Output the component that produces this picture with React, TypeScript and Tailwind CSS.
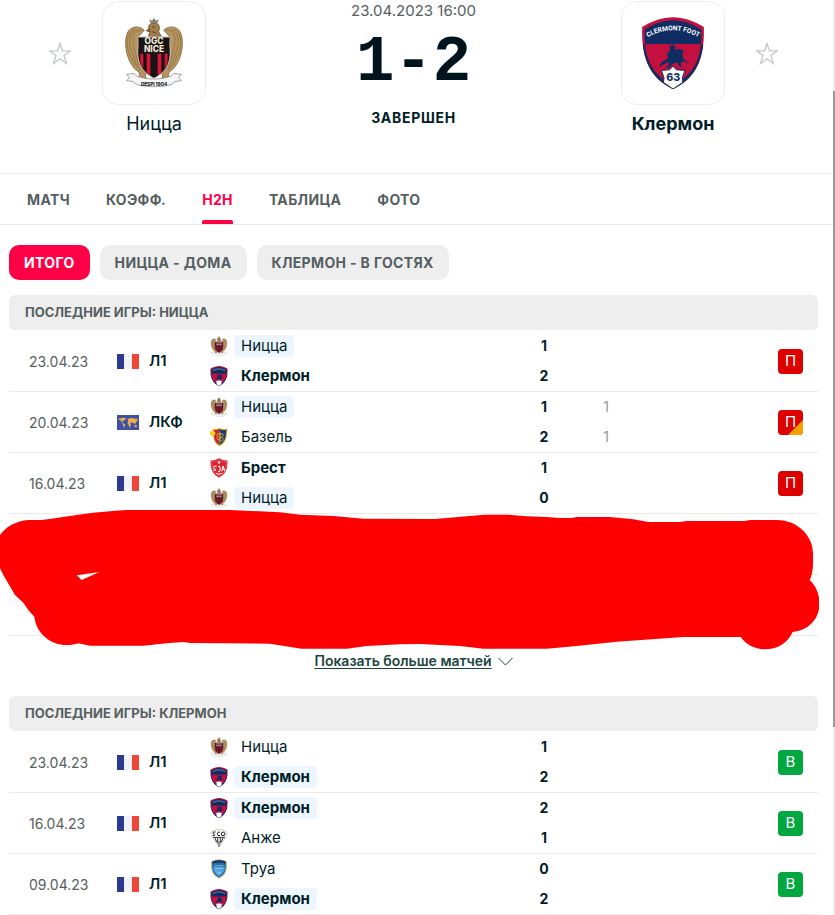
import React from 'react';

type Club = 'nice' | 'clermont' | 'basel' | 'brest' | 'angers' | 'troyes';

interface Side {
  club: Club;
  name: string;
  goals: number;
  extra?: number;
  bold?: boolean;
  current?: boolean;
}

interface Match {
  date: string;
  league: string;
  flag: 'fr' | 'world';
  home: Side;
  away: Side;
  result: 'win' | 'loss' | 'lossAfterDraw';
}

const tabs = ['МАТЧ', 'КОЭФФ.', 'H2H', 'ТАБЛИЦА', 'ФОТО'];
const filters = ['ИТОГО', 'НИЦЦА - ДОМА', 'КЛЕРМОН - В ГОСТЯХ'];

const niceMatches: Match[] = [
  {
    date: '23.04.23',
    league: 'Л1',
    flag: 'fr',
    home: { club: 'nice', name: 'Ницца', goals: 1, current: true },
    away: { club: 'clermont', name: 'Клермон', goals: 2, bold: true },
    result: 'loss',
  },
  {
    date: '20.04.23',
    league: 'ЛКФ',
    flag: 'world',
    home: { club: 'nice', name: 'Ницца', goals: 1, extra: 1, current: true },
    away: { club: 'basel', name: 'Базель', goals: 2, extra: 1 },
    result: 'lossAfterDraw',
  },
  {
    date: '16.04.23',
    league: 'Л1',
    flag: 'fr',
    home: { club: 'brest', name: 'Брест', goals: 1, bold: true },
    away: { club: 'nice', name: 'Ницца', goals: 0, current: true },
    result: 'loss',
  },
];

const clermontMatches: Match[] = [
  {
    date: '23.04.23',
    league: 'Л1',
    flag: 'fr',
    home: { club: 'nice', name: 'Ницца', goals: 1 },
    away: { club: 'clermont', name: 'Клермон', goals: 2, bold: true, current: true },
    result: 'win',
  },
  {
    date: '16.04.23',
    league: 'Л1',
    flag: 'fr',
    home: { club: 'clermont', name: 'Клермон', goals: 2, bold: true, current: true },
    away: { club: 'angers', name: 'Анже', goals: 1 },
    result: 'win',
  },
  {
    date: '09.04.23',
    league: 'Л1',
    flag: 'fr',
    home: { club: 'troyes', name: 'Труа', goals: 0 },
    away: { club: 'clermont', name: 'Клермон', goals: 2, bold: true, current: true },
    result: 'win',
  },
];

const NiceWing = () => (
  <g>
    <path
      d="M342 92C330 78 306 78 294 94C283 112 284 142 291 166C297 188 309 208 326 217L330 240L347 238L343 200L326 170L323 112Z"
      fill="#b8955f"
      stroke="#6b532f"
      strokeWidth="2"
    />
    <path
      d="M333 92C312 90 303 112 310 138L328 212M324 90C300 92 293 120 301 146L322 206M314 88C292 96 286 122 294 154L314 198"
      fill="none"
      stroke="#8a6c3e"
      strokeWidth="2"
    />
    <path d="M326 238l-6 8 9-3 2 6 5-7 10 5-3-11z" fill="#8d6c3b" />
  </g>
);

const NiceCrest = ({ small }: { small?: boolean }) => (
  <svg viewBox="284 53 174 214" className="h-full w-full" aria-hidden="true">
    <NiceWing />
    <g transform="matrix(-1 0 0 1 742 0)">
      <NiceWing />
    </g>
    <path
      d="M354 110l6-18-5-6c-2-10 6-16 16-16 11 0 18 6 16 18l-2 8 8 14z"
      fill="#a37f49"
      stroke="#4d381c"
      strokeWidth="2"
    />
    <path d="M356 88l-8 5 10 3zM366 82h8M366 96l10 4" stroke="#4d381c" strokeWidth="3" fill="#e2ba62" />
    <path d="M360 69l-3-10 8 5 6-9 6 9 8-5-3 10z" fill="#7d766a" />
    <path
      d="M289 224l22-3 8 8c32 12 72 12 104 0l8-8 22 3-8 10 8 9-20 3c-5 20-119 20-124 0l-20-3 8-9z"
      fill="#f5f5f5"
      stroke="#777"
      strokeWidth="2"
    />
    <path
      d="M322 112h98c-4 28 4 46-4 74-6 24-26 40-45 50-19-10-39-26-45-50-8-28 0-46-4-74z"
      fill={small ? '#5c1620' : '#1a1416'}
      stroke="#c9c2b8"
      strokeWidth="3"
    />
    <path
      d="M330 162h9v46l-7-14c-3-10-2-20-2-32zM349 162h11v65l-11-8zM382 162h11v57l-11 8zM403 162h9c0 12 1 22-2 32l-7 14z"
      fill={small ? '#8e1a2c' : '#dc1435'}
    />
    {small ? (
      <path d="M340 127h62M340 146h62" stroke="#b5a49c" strokeWidth="10" />
    ) : (
      <g fill="#f2e8d5" fontFamily="Inter, sans-serif" fontWeight="800" textAnchor="middle">
        <text fontSize="25">
          <tspan x="371" y="134">OGC</tspan>
          <tspan x="371" y="157">NICE</tspan>
        </text>
        <text x="371" y="258" fontSize="14" fill="#222">DESPI 1904</text>
      </g>
    )}
  </svg>
);

const ClermontCrest = ({ small }: { small?: boolean }) => (
  <svg viewBox="126 50 186 217" className="h-full w-full" aria-hidden="true">
    <path
      d="M126 80C158 62 187 51 219 51s61 11 93 29c2 82-14 150-93 187-79-37-95-105-93-187z"
      fill="#c4103f"
    />
    <path
      d="M134 88c27-17 55-28 85-28s58 11 85 28c1 15 1 30-1 45H135c-2-15-2-30-1-45z"
      fill="#0f2d63"
    />
    <path
      d="M128 133h7c6 56 30 96 84 123 54-27 78-67 84-123h7c-7 63-36 109-91 134-55-25-84-71-91-134z"
      fill="#0f2d63"
    />
    <path d="M135 133h168" stroke="#c4103f" strokeWidth="3" />
    <path
      d="M207 126l4 12 8-5 7 5-1 12 9-4 12 2 5 7-4 8 4 14 22 16-24-10-8 8 6 12-12-8-3-8-14 5-9 10-14 1 12-8-2-9-12 5-17 11 10-18 17-8-1-18 8-8z"
      fill="#0f2d63"
    />
    <path
      d="M219 198l10 11 26 2-8 22 2 14-30 20-29-20 2-14-8-22 25-2z"
      fill="#fff"
      stroke="#0f2d63"
      strokeWidth="3"
    />
    {small ? (
      <path d="M152 100q67-38 134 0" fill="none" stroke="#8391b8" strokeWidth="9" />
    ) : (
      <g fontFamily="Roboto, sans-serif" fontWeight="700" textAnchor="middle">
        <path id="clermont-arc" d="M143 111Q219 69 295 111" fill="none" />
        <text fontSize="20" fill="#fff">
          <textPath href="#clermont-arc" startOffset="50%">CLERMONT FOOT</textPath>
        </text>
        <text x="220" y="244" fontSize="32" fill="#0f2d63" fontFamily="Inter, sans-serif" fontWeight="800">63</text>
      </g>
    )}
  </svg>
);

const BaselCrest = () => (
  <svg viewBox="0 0 54 60" className="h-full w-full" aria-hidden="true">
    <path d="M8 5q10 2 20-3 12 6 25 2-2 26-6 36-6 12-18 18-13-6-17-18Q8 28 8 5z" fill="#e5bd3b" />
    <path d="M11 9q9 1 17-3v48q-10-6-14-16-3-12-3-29z" fill="#bf2430" />
    <path d="M28 6q10 5 21 2-1 22-5 31-5 10-16 15z" fill="#1d3e70" />
    <path
      d="M28 14v34M20 22q8-6 16 0M21 22v14q7 6 7-4M31 20q11-2 9 6-2 5-8 5 10 0 7 9-3 3-8 2z"
      fill="none"
      stroke="#e5bd3b"
      strokeWidth="2"
    />
    <circle cx="8" cy="19" r="8" fill="#f0cf21" />
  </svg>
);

const BrestCrest = () => (
  <svg viewBox="0 0 54 60" className="h-full w-full" aria-hidden="true">
    <path d="M2 7Q16 8 27 1q11 7 25 6 4 38-25 52Q-2 45 2 7z" fill="#dc2230" />
    <path d="M5 10Q17 11 27 5q10 6 22 5 2 33-22 45Q3 43 5 10z" fill="none" stroke="#f4b5b8" strokeWidth="1" />
    <path
      d="M27 9v9M23 13h8M20 25q-10-3-10 3 0 4 6 5 5 4-6 5M24 25h6v13q-1 5-6 3M35 40l4-16 6 16M36 34h8M18 46q9 5 18 0"
      fill="none"
      stroke="#fff"
      strokeWidth="3"
    />
  </svg>
);

const AngersCrest = () => (
  <svg viewBox="0 0 54 60" className="h-full w-full" aria-hidden="true">
    <path d="M5 11Q27-2 49 11l3 6-7 13-18 27L9 30 2 17z" fill="#fff" stroke="#aaa" strokeWidth="2" />
    <path
      d="M17 12q-8-2-8 3 0 3 4 4 5 3-5 4M30 12q-8-1-8 5 0 7 8 6M39 12q-5 0-5 6t5 5q6 0 6-5t-6-6"
      fill="none"
      stroke="#222"
      strokeWidth="3"
    />
    <path d="M9 28h36M15 30l5 12M23 29v17M31 29v17M39 30l-5 12M27 40v16" stroke="#333" strokeWidth="3" />
  </svg>
);

const TroyesCrest = () => (
  <svg viewBox="0 0 54 60" className="h-full w-full" aria-hidden="true">
    <path d="M4 6Q27-4 50 6q8 40-23 53Q-4 46 4 6z" fill="#d2c489" />
    <path d="M7 8q20-8 40 0 6 36-20 48Q1 44 7 8z" fill="#1f6fae" />
    <path d="M7 8q20-8 40 0l1 6q-21-7-42 0z" fill="#1c3556" />
    <path d="M10 24h34q0 18-17 28-17-10-17-28z" fill="#4fa4dc" />
    <path d="M13 20h28M16 28h22M22 36q5 10 12 2M21 42h12" fill="none" stroke="#a9d2ee" strokeWidth="2" />
  </svg>
);

const crests: Record<Club, React.ReactNode> = {
  nice: <NiceCrest small />,
  clermont: <ClermontCrest small />,
  basel: <BaselCrest />,
  brest: <BrestCrest />,
  angers: <AngersCrest />,
  troyes: <TroyesCrest />,
};

const Flag = ({ kind }: { kind: Match['flag'] }) =>
  kind === 'fr' ? (
    <svg viewBox="0 0 22 15" className="h-[15px] w-[22px] shrink-0" aria-hidden="true">
      <path d="M0 0h7v15H0z" fill="#2b3990" />
      <path d="M7 0h8v15H7z" fill="#f1f1f6" />
      <path d="M15 0h7v15h-7z" fill="#ee4639" />
    </svg>
  ) : (
    <svg viewBox="0 0 66 45" className="h-[15px] w-[22px] shrink-0" aria-hidden="true">
      <path d="M0 0h66v45H0z" fill="#414fa8" />
      <path
        d="M5 11l12-3 11 1-5 6-5 3-3 5 7 3 3 4-4 8-3-8-4-8-3-6-5-1zM31 14l8-5 10 1 14 2-3 6-3 5-4 4-4-4-4 1-2-3-3 3 2 4-3 10-4-5-1-6-3-3 3-5zM53 29l7 2-1 6-7-2z"
        fill="#ecb043"
      />
    </svg>
  );

const StarButton = ({ label }: { label: string }) => (
  <button type="button" aria-label={label} className="mt-[41px] h-[23px] w-[22px] shrink-0">
    <svg viewBox="0 0 22 23" className="h-full w-full" fill="none" stroke="#c3c7c8" strokeWidth="1.3">
      <path d="M11 1.500l2.400 7.300h8l-6.400 4.700 2.400 8L11 16.800l-6.400 4.700 2.400-8L.6 8.800h8z" />
    </svg>
  </button>
);

const TeamHead = ({ name, bold, children }: { name: string; bold?: boolean; children: React.ReactNode }) => (
  <div className="flex w-[104px] flex-col items-center gap-2">
    <div className="flex h-[104px] w-[104px] items-center justify-center rounded-2xl border border-[#eee]">
      {children}
    </div>
    <a href="#team" className={`text-[18px] leading-[22px] ${bold ? 'font-bold' : ''}`}>
      {name}
    </a>
  </div>
);

const TeamLine = ({ side }: { side: Side }) => (
  <div className="flex items-center gap-1.5">
    <span className="flex h-5 w-[18px]">{crests[side.club]}</span>
    <span
      className={`rounded px-[7px] text-[15px] leading-[22px] ${side.bold ? 'font-bold' : ''} ${
        side.current ? 'bg-[#edf6ff]' : ''
      }`}
    >
      {side.name}
    </span>
  </div>
);

const ResultBadge = ({ result }: { result: Match['result'] }) => (
  <span
    className={`relative ml-auto flex h-[25px] w-[25px] items-center justify-center overflow-hidden rounded text-[15px] text-white ${
      result === 'win' ? 'bg-[#00a83f]' : 'bg-[#dc0000]'
    }`}
  >
    {result === 'lossAfterDraw' && (
      <svg viewBox="0 0 15 15" className="absolute right-0 bottom-0 h-[15px] w-[15px]" aria-hidden="true">
        <path d="M15 0v15H0z" fill="#f3a000" />
      </svg>
    )}
    <span className="relative">{result === 'win' ? 'В' : 'П'}</span>
  </span>
);

const cell = 'h-[61px] border-b border-[#eaeaea] p-0';

const MatchTable = ({ title, matches, blankRows = 0 }: { title: string; matches: Match[]; blankRows?: number }) => (
  <table aria-label={title} className="mt-px w-full table-fixed border-separate border-spacing-0">
    <colgroup>
      <col className="w-[108px]" />
      <col className="w-[93px]" />
      <col />
      <col className="w-[62px]" />
      <col className="w-[62px]" />
      <col className="w-[181px]" />
    </colgroup>
    <tbody>
      {matches.map((m) => (
        <tr key={m.date}>
          <td className={`${cell} pl-5 text-[14px] text-[#555e61]`}>{m.date}</td>
          <td className={cell}>
            <div className="flex items-center gap-2.5 text-[15px] font-semibold">
              <Flag kind={m.flag} />
              {m.league}
            </div>
          </td>
          <td className={cell}>
            <div className="flex flex-col gap-2">
              <TeamLine side={m.home} />
              <TeamLine side={m.away} />
            </div>
          </td>
          <td className={cell}>
            <div className="flex flex-col gap-2 text-center text-[14px] leading-[22px] font-bold">
              <span>{m.home.goals}</span>
              <span>{m.away.goals}</span>
            </div>
          </td>
          <td className={cell}>
            <div className="flex flex-col gap-2 text-center text-[14px] leading-[22px] text-[#999]">
              <span>{m.home.extra}</span>
              <span>{m.away.extra}</span>
            </div>
          </td>
          <td className={`${cell} pr-[15px]`}>
            <ResultBadge result={m.result} />
          </td>
        </tr>
      ))}
      {Array.from({ length: blankRows }, (_, i) => (
        <tr key={i}>
          <td className={cell} colSpan={6}></td>
        </tr>
      ))}
    </tbody>
  </table>
);

const SectionTitle = ({ children }: { children: React.ReactNode }) => (
  <h2 className="flex h-[35px] items-center rounded-md bg-[#eee] px-4 text-[13px] font-bold text-[#555e61]">
    {children}
  </h2>
);

// Hand-painted red marker over the last rows
const Marker = () => (
  <div className="absolute -right-px -bottom-[14px] -left-[9px] h-[140px]">
    <svg viewBox="0 30 2457 420" preserveAspectRatio="none" className="h-full w-full" aria-hidden="true">
      <path
        fill="#ff0000"
        fillRule="evenodd"
        d="M0 105Q30 65 85 60L125 60C200 50 290 34 380 30L690 30L840 37L900 44L1000 48L1090 56L1305 57L1400 49L1455 44L1525 44L1580 49L1640 51L1680 54L1715 54L1730 51L1830 51L1900 58L1945 66L2040 66L2060 63L2235 63L2250 60L2330 60C2395 60 2439 110 2439 160L2439 195Q2438 222 2429 240C2478 285 2470 385 2378 396C2350 460 2260 465 2222 411L2050 411L1850 425L1730 438L1640 446L1450 446L1380 438L1260 432L1200 433L1100 438L1040 446L905 446L810 431L570 429L550 426L500 430L430 437L270 437L235 430C170 450 110 410 103 350L85 330L70 308L45 285L10 225L0 205ZM230 226L298 216L245 240Z"
      />
    </svg>
  </div>
);

export default function App() {
  return (
    <div className="flex bg-white font-[Inter,sans-serif] text-[#001e28]">
      <div className="min-w-0 flex-1">
        <header className="flex items-start border-b border-[#eaeaea] pt-px pr-[55px] pb-[38px] pl-[49px]">
          <StarButton label="Добавить Ницца в избранное" />
          <div className="ml-[31px]">
            <TeamHead name="Ницца">
              <div className="h-[72px] w-[58px]">
                <NiceCrest />
              </div>
            </TeamHead>
          </div>
          <div className="flex flex-1 flex-col items-center">
            <time className="text-[15px] leading-5 text-[#555e61]">23.04.2023 16:00</time>
            <div className="mt-2.5 font-['Liberation_Mono',monospace] text-[64px] leading-[64px] font-bold text-[#00141e]">
              1-2
            </div>
            <div className="mt-[13px] text-[14px] leading-5 font-bold tracking-wider">ЗАВЕРШЕН</div>
          </div>
          <div className="mr-[31px]">
            <TeamHead name="Клермон" bold>
              <div className="h-[72px] w-[62px]">
                <ClermontCrest />
              </div>
            </TeamHead>
          </div>
          <StarButton label="Добавить Клермон в избранное" />
        </header>

        <nav className="flex h-[51px] gap-9 border-b border-[#eaeaea] pl-[27px]">
          {tabs.map((tab) => (
            <a
              key={tab}
              href="#tab"
              className={`relative flex items-center text-[14px] font-bold tracking-wide ${
                tab === 'H2H' ? 'text-[#ff0046]' : 'text-[#555e61]'
              }`}
            >
              {tab}
              {tab === 'H2H' && <span className="absolute inset-x-0 bottom-0 h-1 rounded-t-xs bg-[#ff0046]" />}
            </a>
          ))}
        </nav>

        <main className="pt-5 pr-[15px] pl-[9px]">
          <div className="mb-[15px] flex gap-2.5">
            {filters.map((filter, i) => (
              <button
                key={filter}
                type="button"
                className={`h-[35px] rounded-[10px] px-[15px] text-[14px] font-bold tracking-wide ${
                  i === 0 ? 'bg-[#ff0046] text-white' : 'bg-[#eee] text-[#555e61]'
                }`}
              >
                {filter}
              </button>
            ))}
          </div>

          <section>
            <SectionTitle>ПОСЛЕДНИЕ ИГРЫ: НИЦЦА</SectionTitle>
            <div className="relative">
              <MatchTable title="Последние игры: Ницца" matches={niceMatches} blankRows={2} />
              <Marker />
            </div>
            <div className="flex justify-center pt-[15px] pb-[25px]">
              <button
                type="button"
                className="flex items-center gap-1.5 text-[14px] leading-5 font-semibold text-[#1d4540]"
              >
                <span className="underline underline-offset-2">Показать больше матчей</span>
                <svg viewBox="0 0 15 9" className="h-[9px] w-[15px]" fill="none" stroke="currentColor" aria-hidden="true">
                  <path d="M.5 1l7 7 7-7" />
                </svg>
              </button>
            </div>
          </section>

          <section>
            <SectionTitle>ПОСЛЕДНИЕ ИГРЫ: КЛЕРМОН</SectionTitle>
            <MatchTable title="Последние игры: Клермон" matches={clermontMatches} />
          </section>
        </main>
      </div>

      {/* page scroll track */}
      <div className="w-0.5 bg-[#f0f0f0] pt-[91px]">
        <div className="h-[636px] bg-[#999]" />
      </div>
    </div>
  );
}
